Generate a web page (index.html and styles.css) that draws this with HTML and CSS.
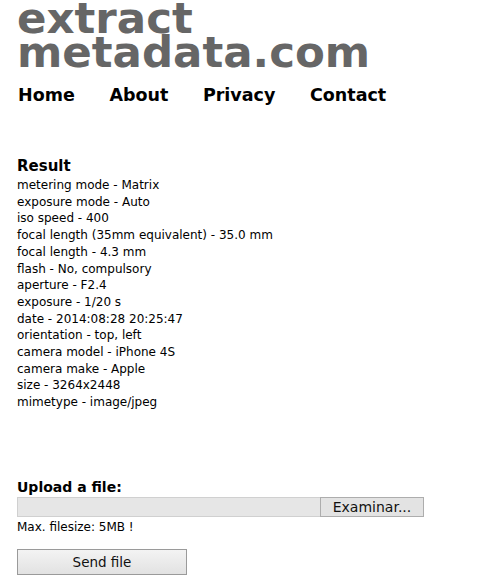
FILE: index.html
```html
<!DOCTYPE html>
<html lang="en">
<head>
<meta charset="utf-8">
<title>extract metadata.com</title>
<link rel="stylesheet" href="styles.css">
</head>
<body>
<div class="page">
  <h1 class="logo">extract<br>metadata.com</h1>
  <nav class="nav">
    <a href="#">Home</a>
    <a href="#">About</a>
    <a href="#">Privacy</a>
    <a href="#">Contact</a>
  </nav>
  <section class="result">
    <h2 class="result-title">Result</h2>
    <ul class="meta">
      <li>metering mode - Matrix</li>
      <li>exposure mode - Auto</li>
      <li>iso speed - 400</li>
      <li>focal length (35mm equivalent) - 35.0 mm</li>
      <li>focal length - 4.3 mm</li>
      <li>flash - No, compulsory</li>
      <li>aperture - F2.4</li>
      <li>exposure - 1/20 s</li>
      <li>date - 2014:08:28 20:25:47</li>
      <li>orientation - top, left</li>
      <li>camera model - iPhone 4S</li>
      <li>camera make - Apple</li>
      <li>size - 3264x2448</li>
      <li>mimetype - image/jpeg</li>
    </ul>
  </section>
  <form class="upload" action="#">
    <h2 class="upload-title">Upload a file:</h2>
    <div class="file">
      <span class="file-name"></span>
      <span class="file-btn">Examinar...</span>
    </div>
    <p class="note">Max. filesize: 5MB !</p>
    <button type="button" class="send">Send file</button>
  </form>
</div>
</body>
</html>
```

FILE: styles.css
```css
html, body {
  margin: 0;
  padding: 0;
  background: #fff;
}
body {
  font-family: "DejaVu Sans", Verdana, sans-serif;
  color: #000;
}
.page {
  padding-left: 17px;
}
.logo {
  margin: 1px 0 0;
  font-size: 43.5px;
  line-height: 34px;
  font-weight: bold;
  color: #666;
}
.nav {
  display: flex;
  gap: 34.6px;
  margin-top: 15px;
  padding-left: 1px;
  line-height: 22px;
  font-size: 17.5px;
  font-weight: bold;
}
.nav a {
  color: #000;
  text-decoration: none;
}
.result-title {
  margin: 53px 0 0;
  font-size: 15px;
  line-height: 15px;
  font-weight: bold;
}
.meta {
  list-style: none;
  margin: 3px 0 0;
  padding: 0;
  font-size: 12px;
  line-height: 16.7px;
}
.upload-title {
  margin: 68px 0 0;
  font-size: 14px;
  line-height: 16px;
  font-weight: bold;
}
.file {
  display: flex;
  width: 407px;
  height: 20px;
  margin-top: 2px;
}
.file-name {
  flex: 1;
  background: #e6e6e6;
  border: 1px solid #d0d0d0;
  border-right: none;
}
.file-btn {
  box-sizing: border-box;
  width: 104px;
  height: 20px;
  border: 1px solid #adadad;
  background: #e3e3e3;
  font-size: 14px;
  line-height: 18px;
  text-align: center;
  color: #111;
}
.note {
  margin: 3px 0 0;
  font-size: 12px;
  line-height: 15px;
}
.send {
  display: block;
  box-sizing: border-box;
  width: 170px;
  height: 26px;
  margin-top: 14px;
  padding: 0;
  border: 1px solid #9a9a9a;
  border-radius: 0;
  background: linear-gradient(#f3f3f3, #e2e2e2);
  font-family: "DejaVu Sans", Verdana, sans-serif;
  font-size: 13.5px;
  color: #111;
}
```
